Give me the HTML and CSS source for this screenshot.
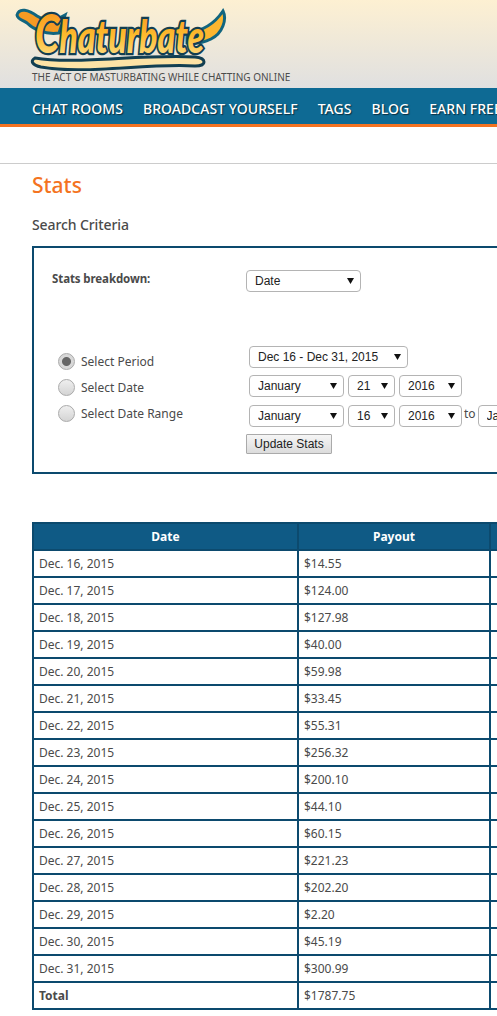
FILE: index.html
```html
<!DOCTYPE html>
<html lang="en">
<head>
  <meta charset="UTF-8" />
  <title>Stats</title>
  <link rel="stylesheet" href="styles.css">
</head>
<body>
  <div class="header">
    <svg class="logo" width="212" height="68" viewBox="0 0 212 68">
      <defs>
        <linearGradient id="gold" x1="0" y1="0" x2="0" y2="1">
          <stop offset="0.1" stop-color="#f7931e"/>
          <stop offset="0.55" stop-color="#fdbb2d"/>
          <stop offset="1" stop-color="#fde7a0"/>
        </linearGradient>
      </defs>
      <!-- swoosh under the word -->
      <path d="M20 55 C60 62 125 51 180 54 C192 55 192 63 180 63 C130 60 70 72 26 64 C17 62 15 58 20 55 Z" fill="#fde3a6" stroke="#123f52" stroke-width="3"/>
      <!-- left flourish of the C, right flourish of the e -->
      <path d="M2 12 C4 4 14 7 22 13 C30 18 40 18 50 12 L44 30 C30 32 18 26 12 20 C8 17 3 17 2 12 Z" fill="#f59a23" stroke="#11657f" stroke-width="3"/>
      <path d="M172 30 C188 28 200 20 208 8 C212 16 208 30 196 36 C188 40 180 41 172 40 Z" fill="#fdb62f" stroke="#11657f" stroke-width="3"/>
      <text class="logo-word" transform="translate(20 50) scale(0.85 1.14)" fill="url(#gold)" stroke="#123f52" stroke-width="4" paint-order="stroke"><tspan class="logo-cap">C</tspan>haturbate</text>
    </svg>
    <div class="tagline">THE ACT OF MASTURBATING WHILE CHATTING ONLINE</div>
  </div>

  <div class="nav">
    <a>CHAT ROOMS</a>
    <a>BROADCAST YOURSELF</a>
    <a>TAGS</a>
    <a>BLOG</a>
    <a>EARN FREE TOKENS</a>
  </div>

  <div class="subnav"></div>

  <div class="content">
    <h1>Stats</h1>
    <h2>Search Criteria</h2>

    <div class="criteria">
      <div class="breakdown">
        <label>Stats breakdown:</label>
        <select class="w115"><option>Date</option></select>
      </div>

      <div class="periods">
        <div class="radios">
          <label class="radio"><input type="radio" name="period" checked /> Select Period</label>
          <label class="radio"><input type="radio" name="period" /> Select Date</label>
          <label class="radio"><input type="radio" name="period" /> Select Date Range</label>
        </div>
        <div class="pickers">
          <div class="picker-row"><select class="w159"><option>Dec 16 - Dec 31, 2015</option></select></div>
          <div class="picker-row">
            <select class="w95"><option>January</option></select>
            <select class="w47"><option>21</option></select>
            <select class="w63"><option>2016</option></select>
          </div>
          <div class="picker-row">
            <select class="w95"><option>January</option></select>
            <select class="w47"><option>16</option></select>
            <select class="w63"><option>2016</option></select>
            <span class="to">to</span>
            <select class="w95"><option>January</option></select>
          </div>
          <button class="update-btn">Update Stats</button>
        </div>
      </div>
    </div>

    <table class="stats">
      <thead>
        <tr><th class="col-date">Date</th><th class="col-payout">Payout</th><th class="col-more"></th></tr>
      </thead>
      <tbody>
        <tr><td>Dec. 16, 2015</td><td>$14.55</td><td></td></tr>
        <tr><td>Dec. 17, 2015</td><td>$124.00</td><td></td></tr>
        <tr><td>Dec. 18, 2015</td><td>$127.98</td><td></td></tr>
        <tr><td>Dec. 19, 2015</td><td>$40.00</td><td></td></tr>
        <tr><td>Dec. 20, 2015</td><td>$59.98</td><td></td></tr>
        <tr><td>Dec. 21, 2015</td><td>$33.45</td><td></td></tr>
        <tr><td>Dec. 22, 2015</td><td>$55.31</td><td></td></tr>
        <tr><td>Dec. 23, 2015</td><td>$256.32</td><td></td></tr>
        <tr><td>Dec. 24, 2015</td><td>$200.10</td><td></td></tr>
        <tr><td>Dec. 25, 2015</td><td>$44.10</td><td></td></tr>
        <tr><td>Dec. 26, 2015</td><td>$60.15</td><td></td></tr>
        <tr><td>Dec. 27, 2015</td><td>$221.23</td><td></td></tr>
        <tr><td>Dec. 28, 2015</td><td>$202.20</td><td></td></tr>
        <tr><td>Dec. 29, 2015</td><td>$2.20</td><td></td></tr>
        <tr><td>Dec. 30, 2015</td><td>$45.19</td><td></td></tr>
        <tr><td>Dec. 31, 2015</td><td>$300.99</td><td></td></tr>
        <tr><td class="total">Total</td><td>$1787.75</td><td></td></tr>
      </tbody>
    </table>
  </div>
</body>
</html>
```
FILE: styles.css
```css
html, body {
  margin: 0;
  height: 1016px;
  overflow: hidden;
  background: #fff;
}

body {
  font-family: "Noto Sans", "Open Sans", sans-serif;
  color: #4a4a4a;
  font-size: 12px;
}

.header {
  height: 88px;
  padding-left: 15px;
  background: linear-gradient(#fdf0d2, #e0e0e0);
  box-sizing: border-box;
  position: relative;
}

.logo {
  display: block;
  padding-top: 3px;
}

.logo-word {
  font-family: "Lato", sans-serif;
  font-weight: 900;
  font-style: italic;
  font-size: 40px;
}

.logo-cap {
  font-size: 46px;
}

.tagline {
  margin-left: 17px;
  margin-top: -1px;
  font-size: 10px;
  line-height: 14px;
  color: #4c4c4c;
  white-space: nowrap;
}

.nav {
  height: 32px;
  padding-top: 4px;
  background: #0e6a94;
  border-bottom: 3px solid #f47321;
  display: flex;
  gap: 20px;
  padding-left: 32px;
  align-items: center;
  white-space: nowrap;
}

.nav a {
  color: #fff;
  font-size: 14px;
  font-weight: 500;
  letter-spacing: 0.05px;
  text-shadow: 1px 1px 1px #0a2f40;
}

.subnav {
  height: 36px;
  border-bottom: 1px solid #ccc;
}

.content {
  padding-left: 32px;
}

h1 {
  margin: 8px 0 0;
  font-size: 21px;
  line-height: 27px;
  font-weight: 500;
  color: #f47321;
}

h2 {
  margin: 16px 0 0;
  font-size: 14px;
  line-height: 20px;
  font-weight: 500;
  letter-spacing: -0.1px;
  color: #4a4a4a;
}

.criteria {
  width: 800px;
  height: 224px;
  margin-top: 11px;
  border: 2px solid #0c4a6e;
  box-sizing: content-box;
}

.breakdown {
  display: flex;
  align-items: flex-start;
  padding: 22px 0 0 18px;
}

.breakdown label {
  width: 194px;
  font-weight: bold;
  font-size: 11.5px;
  letter-spacing: -0.1px;
  line-height: 18px;
}

.periods {
  display: flex;
  margin-top: 54px;
  padding-left: 24px;
}

.radios {
  width: 191px;
  padding-top: 2px;
}

.radio {
  display: flex;
  align-items: center;
  gap: 6px;
  height: 26px;
  white-space: nowrap;
}

.radio input {
  appearance: none;
  width: 17px;
  height: 17px;
  margin: 0;
  border: 1px solid #aaa;
  border-radius: 50%;
  background: linear-gradient(#efefef, #d4d4d4);
  box-sizing: border-box;
}

.radio input:checked {
  background: radial-gradient(circle, #666 0 4px, #d8d8d8 5px);
}

.pickers {
  display: flex;
  flex-direction: column;
  align-items: flex-start;
}

.picker-row {
  display: flex;
  gap: 4px;
  height: 22px;
  margin-bottom: 8px;
  white-space: nowrap;
}

.picker-row:first-child {
  margin-bottom: 7px;
}

.picker-row:nth-child(3) {
  margin-bottom: 7px;
}

select {
  appearance: none;
  height: 22px;
  padding: 0 0 0 8px;
  border: 1px solid #b4b4b4;
  border-radius: 4px;
  color: #222;
  font-family: "Liberation Sans", sans-serif;
  font-size: 12px;
  background: #fff url("data:image/svg+xml,%3Csvg xmlns='http://www.w3.org/2000/svg' width='7' height='6'%3E%3Cpath d='M0 0h7L3.5 6z' fill='%23111'/%3E%3C/svg%3E") no-repeat right 6px center;
  flex: none;
}

.w115 { width: 115px; }
.w159 { width: 159px; }
.w95 { width: 95px; }
.w47 { width: 47px; }
.w63 { width: 63px; }

.to {
  margin: 0 -2px;
  line-height: 18px;
}

.update-btn {
  margin-left: -3px;
  height: 20px;
  width: 86px;
  padding: 0;
  border: 1px solid #aaa;
  border-radius: 1px;
  background: linear-gradient(#f6f6f6, #dcdcdc);
  color: #222;
  font-family: "Liberation Sans", sans-serif;
  font-size: 12px;
}

.stats {
  margin-top: 48px;
  width: 800px;
  table-layout: fixed;
  border-collapse: collapse;
  border: 2px solid #0c4a6e;
}

.stats th, .stats td {
  border: 2px solid #0c4a6e;
  height: 25px;
  padding: 0 5px;
  box-sizing: content-box;
  line-height: 18px;
  text-align: left;
}

.stats th {
  background: #0f5a85;
  color: #fff;
  text-align: center;
  font-weight: bold;
}

.col-date { width: 253px; }
.col-payout { width: 180px; }

.total {
  font-weight: bold;
}
```
